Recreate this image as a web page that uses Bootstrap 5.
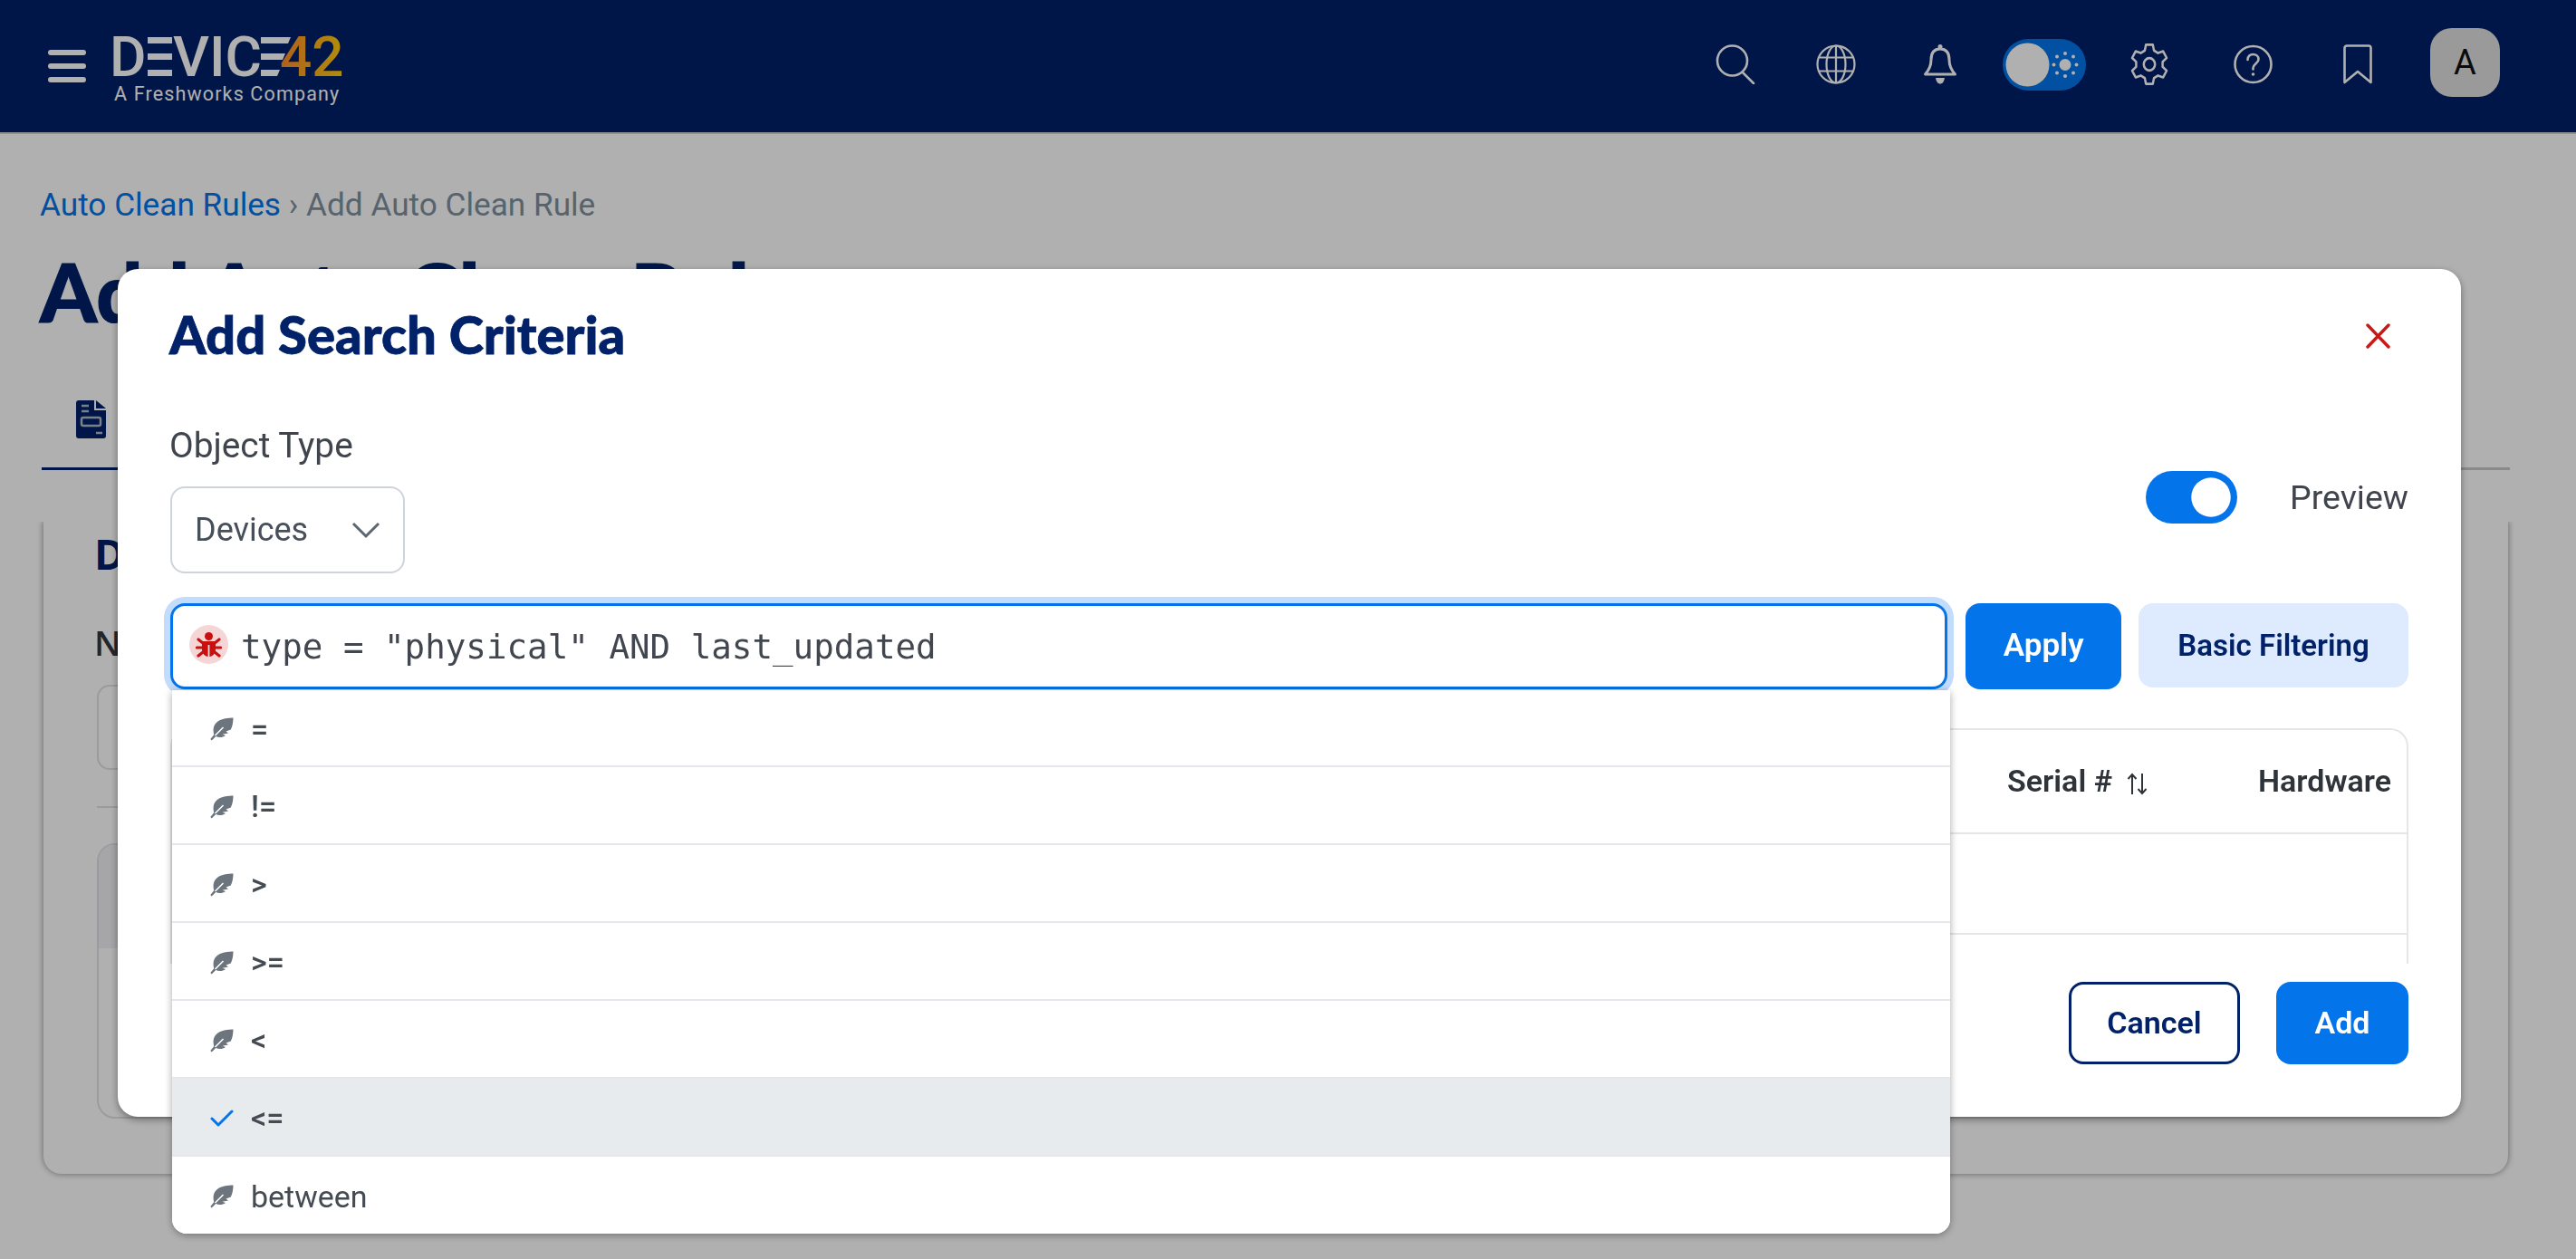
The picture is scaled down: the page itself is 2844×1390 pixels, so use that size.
<!DOCTYPE html>
<html lang="en">
<head>
<meta charset="utf-8">
<title>Add Auto Clean Rule</title>
<link href="https://cdn.jsdelivr.net/npm/bootstrap@5.3.0/dist/css/bootstrap.min.css" rel="stylesheet">
<style>
html,body{height:1390px;overflow:hidden}
body{background:#fff;font-family:Roboto,"Liberation Sans",sans-serif;color:#40454d}
.topbar{height:148px;background:#012169;border-bottom:2px solid #cfcfcf;padding:0 84px 0 53px}
.logo-wrap{margin-left:30px;width:252px;margin-bottom:5px}
.logo-svg{display:block;margin:0 0 -11px -6px}
.logo-sub{font-size:21.5px;letter-spacing:1.15px;color:#fff;line-height:24px;margin:4px 0 0 1px;white-space:nowrap}
.nav-right{margin-bottom:4px}
.ic-globe{margin-left:67px}.ic-bell{margin-left:74px}.ic-toggle{margin-left:50px}.ic-gear{margin-left:49px}.ic-help{margin-left:72px}.ic-mark{margin-left:78px}.ic-av{margin-left:64px}
.avatar-box{width:77px;height:76px;border-radius:24px;background:#dfdfdf;color:#111;font-size:38px;line-height:1;margin-bottom:4px}
.page{padding-left:44px}
.crumbs{font-size:35.2px;line-height:42px;padding-top:57px;color:#7e909f;white-space:nowrap}
.crumbs a{color:#0474ea;text-decoration:none}
.page-title{font-family:Lato,"Noto Sans",sans-serif;font-weight:900;font-size:90px;line-height:113px;color:#012169;margin:18px 0 0;white-space:nowrap;-webkit-text-stroke:1.2px #012169}
.tabs-bar{height:141px;margin-left:2px;width:2725px;border-bottom:3px solid #c9c9c9}
.tab-on{height:141px;width:300px;border-bottom:3px solid #012169;padding:64px 0 0 38px}
.outer-card{margin:57px 0 0 4px;width:2721px;height:720px;border-radius:0 0 20px 20px;background:#fff;box-shadow:0 0 6px 1px rgba(0,0,0,.35);clip-path:inset(0 -12px -12px -12px);padding:8px 60px 0 59px}
.outer-h{font-family:"Open Sans",sans-serif;font-weight:700;font-size:46px;line-height:54px;color:#012169;margin:0 0 0 -3px}
.outer-l{font-family:"Open Sans",sans-serif;font-weight:600;font-size:38px;line-height:46px;margin:48px 0 0 -3px;color:#33383f}
.outer-in{height:94px;border:2px solid #dee2e6;border-radius:14px;margin-top:24px}
.outer-hr{height:2px;background:#dee2e6;margin-top:40px}
.outer-tb{height:304px;border:2px solid #dee2e6;border-radius:20px;margin-top:39px;overflow:hidden}
.outer-tb div{height:114px;background:#f1f1f4}
.modal-backdrop{--bs-backdrop-opacity:.31}
.modal-dialog.search-dialog{max-width:none;width:2587px;margin:297px 0 0 130px}
.search-content{height:936px;border:0;border-radius:22px;box-shadow:0 3px 8px rgba(0,0,0,.4);padding:36px 58px 0 57px;display:block}
.search-title{font-family:Lato,"Noto Sans",sans-serif;font-weight:900;font-size:58px;line-height:72px;color:#012169;margin:0;-webkit-text-stroke:.8px #012169}
.close-x{margin:4px 20px 0 0}
.obj-row{margin-top:65px;height:163px}
.obj-lab{font-size:38.8px;line-height:43px;margin-bottom:24px;display:block}
.obj-sel{width:259px;height:96px;margin-left:1px;border:2px solid #cfd4da;border-radius:16px;font-size:36px;color:#47505a;padding:0 0 0 25px;background-size:32px 20px;background-position:right 25px center;background-image:url("data:image/svg+xml,%3csvg xmlns='http://www.w3.org/2000/svg' viewBox='0 0 32 20'%3e%3cpath fill='none' stroke='%235c6670' stroke-width='3' d='M2 3l14 14L30 3'/%3e%3c/svg%3e")}
.sw-wrap{margin-bottom:5px !important}
.sw-input.form-check-input{width:101px;height:58px;margin:0;border:0;float:none;background-color:#0474ea;border-radius:29px}
.sw-label{margin-left:58px;font-size:37.5px;line-height:44px}
.q-row{margin-top:33px;gap:20px;height:95px}
.q-box{width:1963px;margin-left:1px}
.q-input.form-control,.q-input.form-control:focus{height:95px;border:3px solid #0474ea;border-radius:16px;box-shadow:0 0 0 7px #c2dcfd;padding:0 0 0 75px;font-family:"DejaVu Sans Mono",monospace;font-size:37.5px;color:#41464f}
.bug-wrap{left:21px;top:24px;width:43px;height:43px;border-radius:50%;background:#f5d6d6}
.btn-blue{background:#0474ea;border:0;color:#fff;font-weight:600;font-size:35px;border-radius:16px}
.btn-apply{width:172px;height:95px}
.btn-basic{width:298px;height:93px;margin-left:-1px;background:#deeafd;border:0;color:#012169;font-weight:600;font-size:33px;border-radius:16px;padding:0}
.opts{left:2px;top:96px;width:1963px;z-index:5;border-radius:0 0 16px 16px;box-shadow:0 2px 9px rgba(0,0,0,.35);background:#fff;--bs-list-group-border-color:#e6e6ec;--bs-list-group-border-width:2px}
.opt{height:86px;display:flex;align-items:center;gap:19px;padding:3px 0 0 42px;border-left:0;border-right:0;font-size:34px;color:#454b52;font-weight:500}
.opt:first-child{height:85px;border-top:0;border-radius:16px 16px 0 0}
.opt:last-child{height:85px;border-bottom:0;border-radius:0 0 16px 16px;font-weight:400}
.opt-on{background:#e8ebee}
.opt svg{flex:none}
.res-box{margin-top:43px;height:260px;width:2471px;margin-left:1px;border:2px solid #e6e6ea;border-bottom:0;border-radius:20px 20px 0 0;overflow:hidden}
.res-table{table-layout:fixed;width:100%;margin:0;--bs-table-border-color:#e6e6ea}
.res-table th,.res-table td{border-bottom:2px solid #e6e6ea;padding:0 0 0 16px;vertical-align:middle;font-size:34px;font-weight:600;color:#2f343a}
.res-table th{height:114px}
.res-table td{height:111px}
.col-ser{width:277px}.col-hw{width:180px}
.foot{margin-top:20px;gap:40px}
.btn-cancel{width:189px;height:91px;border:3px solid #012169;background:#fff;color:#012169;font-weight:600;font-size:34px;border-radius:16px;padding:0}
.btn-add{width:146px;height:91px;font-size:34px;padding:0}
</style>
</head>
<body>
<nav class="topbar d-flex align-items-center">
  <svg width="42" height="36" viewBox="0 0 42 36" aria-label="Menu"><g fill="#fff"><rect width="42" height="6" rx="3"/><rect y="15" width="42" height="6" rx="3"/><rect y="30" width="42" height="6" rx="3"/></g></svg>
  <div class="logo-wrap">
    <svg class="logo-svg" width="264" height="73" viewBox="-6 -14 264 73" aria-label="Device42">
      <defs><linearGradient id="g42" x1="0" x2="1" y1="0" y2="0"><stop offset="0" stop-color="#ff8a2c"/><stop offset="1" stop-color="#ffce12"/></linearGradient></defs>
      <g fill="#fff" font-family="Roboto, sans-serif" font-weight="500" font-size="62">
        <text x="-4" y="44">D</text>
        <g><rect x="38" y="1" width="27" height="7"/><rect x="38" y="19" width="27" height="7"/><rect x="38" y="37" width="27" height="7"/></g>
        <text x="66" y="44">VIC</text>
        <g><polygon points="163,1 196,1 193,8 163,8"/><polygon points="163,19 190,19 187,26 163,26"/><polygon points="163,37 184,37 181,44 163,44"/></g>
      </g>
      <text x="184" y="44" fill="url(#g42)" font-family="Roboto, sans-serif" font-weight="500" font-size="62">42</text>
    </svg>
    <div class="logo-sub">A Freshworks Company</div>
  </div>
  <div class="nav-right ms-auto d-flex align-items-center">
    <svg width="44" height="44" viewBox="0 0 44 44" aria-label="Search" fill="none" stroke="#fff" stroke-width="2.6"><circle cx="18.5" cy="18" r="16.5"/><path d="M30 31l12 12" stroke-linecap="round"/></svg>
    <svg class="ic-globe" width="44" height="44" viewBox="0 0 44 44" aria-label="Language" fill="none" stroke="#fff" stroke-width="2.2"><circle cx="22" cy="22" r="20.5"/><ellipse cx="22" cy="22" rx="10.5" ry="20.5"/><path d="M22 1.5v41M3.500 14.500h37M3.500 29.500h37"/></svg>
    <svg class="ic-bell" width="38" height="44" viewBox="0 0 38 44" aria-label="Notifications"><path fill="none" stroke="#fff" stroke-width="3" stroke-linejoin="round" d="M19 5C12 5 9 10 9 17c0 7-2 11-6.500 16h33C31 28 29 24 29 17 29 10 26 5 19 5Z"/><circle cx="19" cy="2.500" r="2.500" fill="#fff"/><path fill="#fff" d="M14 37h10c-.8 4.500-2.600 6.500-5 6.500S14.800 41.500 14 37Z"/></svg>
    <svg class="ic-toggle" width="92" height="57" viewBox="0 0 92 57" aria-label="Theme"><rect width="92" height="57" rx="28.500" fill="#0474ea"/><circle cx="27.500" cy="28.500" r="24" fill="#fff"/><g fill="#fff"><circle cx="69" cy="28.500" r="6.500"/><circle cx="69" cy="16" r="2"/><circle cx="69" cy="41" r="2"/><circle cx="56.500" cy="28.500" r="2"/><circle cx="81.500" cy="28.500" r="2"/><circle cx="60" cy="19.500" r="2"/><circle cx="78" cy="19.500" r="2"/><circle cx="60" cy="37.500" r="2"/><circle cx="78" cy="37.500" r="2"/></g></svg>
    <svg class="ic-gear" width="42" height="46" viewBox="0 0 44 44" preserveAspectRatio="none" aria-label="Settings" fill="none" stroke="#fff" stroke-width="2.600" stroke-linejoin="round"><polygon points="16.700,7.400 18,1.400 26,1.400 27.300,7.400 32,10.100 37.900,8.200 41.900,15.200 37.300,19.300 37.300,24.700 41.900,28.800 37.900,35.800 32,33.900 27.300,36.600 26,42.600 18,42.600 16.700,36.600 12,33.900 6.100,35.800 2.100,28.800 6.700,24.700 6.700,19.300 2.100,15.200 6.100,8.200 12,10.100"/><circle cx="22" cy="22" r="6.500"/></svg>
    <svg class="ic-help" width="43" height="44" viewBox="0 0 43 44" aria-label="Help" fill="none" stroke="#fff" stroke-width="2.600"><circle cx="21.500" cy="22" r="20"/><path d="M15.500 17c0-4 2.700-6 6-6s6 2.200 6 5.500c0 4.500-6 4.800-6 9.500v1.500" stroke-linecap="round"/><circle cx="21.500" cy="33" r="1.800" fill="#fff" stroke="none"/></svg>
    <svg class="ic-mark" width="32" height="44" viewBox="0 0 32 44" aria-label="Bookmarks"><path fill="none" stroke="#fff" stroke-width="2.600" stroke-linejoin="round" d="M1.500 4a2.500 2.500 0 0 1 2.500-2.500h24A2.500 2.500 0 0 1 30.500 4v38L16 30 1.500 42Z"/></svg>
    <div class="ic-av avatar-box d-flex align-items-center justify-content-center">A</div>
  </div>
</nav>

<main class="page">
  <div class="crumbs"><a href="#">Auto Clean Rules</a> › Add Auto Clean Rule</div>
  <h1 class="page-title">Add Auto Clean Rule</h1>
  <div class="tabs-bar">
    <div class="tab-on">
      <svg width="33" height="42" viewBox="0 0 33 42" aria-label="Details"><path fill="#012169" d="M3 0h17v11h13v28a3 3 0 0 1-3 3H3a3 3 0 0 1-3-3V3a3 3 0 0 1 3-3Zm19 0 11 9H22Z"/><g fill="none" stroke="#b0bac8" stroke-width="2.500"><path d="M6 6h8M6 12h8M22 36h7"/><rect x="6" y="19" width="21" height="9" rx="2"/></g></svg>
    </div>
  </div>
  <section class="outer-card">
    <h2 class="outer-h">Details</h2>
    <div class="outer-l">Name</div>
    <div class="outer-in"></div>
    <div class="outer-hr"></div>
    <div class="outer-tb"><div></div></div>
  </section>
</main>

<div class="modal-backdrop show"></div>
<div class="modal d-block" role="dialog">
  <div class="modal-dialog search-dialog">
    <div class="modal-content search-content">
      <div class="d-flex align-items-center justify-content-between">
        <h2 class="search-title">Add Search Criteria</h2>
        <svg class="close-x" width="27" height="28" viewBox="0 0 27 28" aria-label="Close"><path d="M2 2l23 24M25 2 2 26" stroke="#c91818" stroke-width="3.400" stroke-linecap="round"/></svg>
      </div>
      <div class="obj-row d-flex align-items-center justify-content-between">
        <div>
          <label class="obj-lab" for="objType">Object Type</label>
          <select id="objType" class="form-select obj-sel"><option>Devices</option></select>
        </div>
        <div class="sw-wrap form-check form-switch d-flex align-items-center m-0 p-0">
          <input class="form-check-input sw-input" type="checkbox" checked id="prev">
          <label class="sw-label" for="prev">Preview</label>
        </div>
      </div>
      <div class="q-row d-flex">
        <div class="q-box position-relative">
          <input class="form-control q-input" value='type = "physical" AND last_updated'>
          <span class="bug-wrap position-absolute d-flex align-items-center justify-content-center">
            <svg width="29" height="29" viewBox="0 0 29 29" aria-label="Syntax error" fill="#c91010" stroke="#c91010"><circle cx="14.500" cy="5.500" r="4.500" stroke="none"/><path stroke="none" d="M8 11h13a1 1 0 0 1 1 1v8c0 4-3 8-7 8h-1c-4 0-7-4-7-8v-8a1 1 0 0 1 1-1Z"/><path stroke="#f5d6d6" stroke-width="1.800" d="M14.500 15v13"/><path fill="none" stroke-width="3.200" stroke-linecap="round" stroke-linejoin="round" d="M8 13 3 9M21 13l5-4M7 18H1.500M22 18h5.500M8 23l-5 4M21 23l5 4"/></svg>
          </span>
          <div class="opts list-group position-absolute">
            <div class="list-group-item opt"><svg width="26" height="26" viewBox="0 0 26 26" aria-hidden="true"><path fill="#6c757d" d="M25.500.5C17 .8 9.500 2 5.500 7.500 3.200 11 3.200 15 4.200 19.300L.3 24l1.400 1.500L6.300 21C10 22.800 13.800 22.300 17 20l-3.500-1.200L20 17.500l-2.500-2 5.300-2C24.700 9.500 25.500 5 25.500.5Z"/><path stroke="#fff" stroke-width="1.600" d="M5.500 20l9-9"/></svg><span>=</span></div>
            <div class="list-group-item opt"><svg width="26" height="26" viewBox="0 0 26 26" aria-hidden="true"><path fill="#6c757d" d="M25.500.5C17 .8 9.500 2 5.500 7.500 3.200 11 3.200 15 4.200 19.300L.3 24l1.400 1.500L6.300 21C10 22.800 13.800 22.300 17 20l-3.500-1.200L20 17.500l-2.500-2 5.300-2C24.700 9.500 25.500 5 25.500.5Z"/><path stroke="#fff" stroke-width="1.600" d="M5.500 20l9-9"/></svg><span>!=</span></div>
            <div class="list-group-item opt"><svg width="26" height="26" viewBox="0 0 26 26" aria-hidden="true"><path fill="#6c757d" d="M25.500.5C17 .8 9.500 2 5.500 7.500 3.200 11 3.200 15 4.200 19.300L.3 24l1.400 1.500L6.300 21C10 22.800 13.800 22.300 17 20l-3.500-1.200L20 17.500l-2.500-2 5.300-2C24.700 9.500 25.500 5 25.500.5Z"/><path stroke="#fff" stroke-width="1.600" d="M5.500 20l9-9"/></svg><span>&gt;</span></div>
            <div class="list-group-item opt"><svg width="26" height="26" viewBox="0 0 26 26" aria-hidden="true"><path fill="#6c757d" d="M25.500.5C17 .8 9.500 2 5.500 7.500 3.200 11 3.200 15 4.200 19.300L.3 24l1.400 1.500L6.300 21C10 22.800 13.800 22.300 17 20l-3.500-1.200L20 17.500l-2.500-2 5.300-2C24.700 9.500 25.500 5 25.500.5Z"/><path stroke="#fff" stroke-width="1.600" d="M5.500 20l9-9"/></svg><span>&gt;=</span></div>
            <div class="list-group-item opt"><svg width="26" height="26" viewBox="0 0 26 26" aria-hidden="true"><path fill="#6c757d" d="M25.500.5C17 .8 9.500 2 5.500 7.500 3.200 11 3.200 15 4.200 19.300L.3 24l1.400 1.500L6.300 21C10 22.800 13.800 22.300 17 20l-3.500-1.200L20 17.500l-2.500-2 5.300-2C24.700 9.500 25.500 5 25.500.5Z"/><path stroke="#fff" stroke-width="1.600" d="M5.500 20l9-9"/></svg><span>&lt;</span></div>
            <div class="list-group-item opt opt-on"><svg width="26" height="26" viewBox="0 0 26 26" aria-hidden="true"><path fill="none" stroke="#0474ea" stroke-width="3" stroke-linecap="round" stroke-linejoin="round" d="M2 13l7 7L24 5"/></svg><span>&lt;=</span></div>
            <div class="list-group-item opt"><svg width="26" height="26" viewBox="0 0 26 26" aria-hidden="true"><path fill="#6c757d" d="M25.500.5C17 .8 9.500 2 5.500 7.500 3.200 11 3.200 15 4.200 19.300L.3 24l1.400 1.500L6.300 21C10 22.800 13.800 22.300 17 20l-3.500-1.200L20 17.500l-2.500-2 5.300-2C24.700 9.500 25.500 5 25.500.5Z"/><path stroke="#fff" stroke-width="1.600" d="M5.500 20l9-9"/></svg><span>between</span></div>
          </div>
        </div>
        <button type="button" class="btn btn-blue btn-apply">Apply</button>
        <button type="button" class="btn btn-basic">Basic Filtering</button>
      </div>
      <div class="res-box">
        <table class="table res-table">
          <colgroup><col><col class="col-ser"><col class="col-hw"></colgroup>
          <thead><tr><th></th><th>Serial # <svg class="ms-2" width="23" height="25" viewBox="0 0 23 25" aria-hidden="true"><path fill="none" stroke="#2f343a" stroke-width="2" d="M6 24V2M1.500 7 6 2l4.500 5M17 1v22M12.500 18l4.500 5 4.500-5"/></svg></th><th>Hardware</th></tr></thead>
          <tbody><tr><td></td><td></td><td></td></tr><tr><td></td><td></td><td></td></tr></tbody>
        </table>
      </div>
      <div class="foot d-flex justify-content-end">
        <button type="button" class="btn btn-cancel">Cancel</button>
        <button type="button" class="btn btn-blue btn-add">Add</button>
      </div>
    </div>
  </div>
</div>
<script src="https://cdn.jsdelivr.net/npm/bootstrap@5.3.0/dist/js/bootstrap.bundle.min.js"></script>
</body>
</html>
